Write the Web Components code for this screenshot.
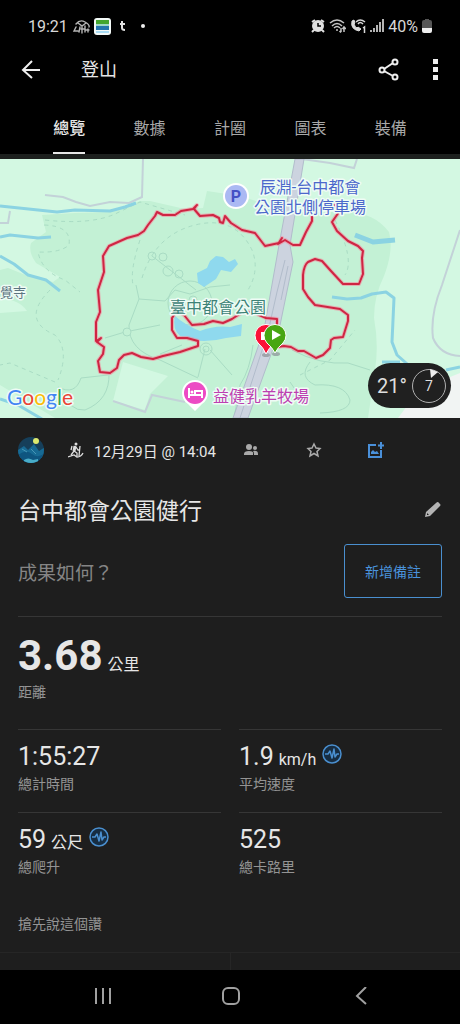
<!DOCTYPE html>
<html lang="zh-Hant">
<head>
<meta charset="utf-8">
<meta name="viewport" content="width=device-width, initial-scale=1">
<title>登山</title>
<style>
    body {
        margin: 0;
        background: #000;
        color: #e6e6e6;
        font-family: Roboto, "Noto Sans CJK TC", sans-serif;
    }
</style>
</head>
<body>
<activity-page></activity-page>

<script>
class StatusBar extends HTMLElement {
    constructor() {
        super();
        this.attachShadow({ mode: 'open' });
    }

    connectedCallback() {
        this.shadowRoot.innerHTML = `
            <style>
                :host {
                    display: flex;
                    justify-content: space-between;
                    align-items: center;
                    height: 52px;
                    padding: 0 28px;
                    box-sizing: border-box;
                    font-size: 16px;
                    color: #d8d8d8;
                }

                .group {
                    display: flex;
                    align-items: center;
                    gap: 4px;
                }

                svg {
                    display: block;
                }
            </style>

            <div class="group">
                <span>19:21</span>
                <svg width="18" height="16" viewBox="0 0 18 16" fill="none" stroke="#b5b5b5" stroke-linecap="round">
                    <path d="M4 6Q8 1 13 4T17 9M6 5L10 8L14 5M4 9L2 13H6M8 9L7 14M10 9V15M13 8V14M16 11V14M9 11H13M13 12H17" stroke-width="1.4"/>
                </svg>
                <svg width="17" height="17" viewBox="0 0 17 17">
                    <rect width="17" height="17" rx="3" fill="#f4faf8"/>
                    <rect x="2" y="2" width="13" height="4" fill="#43a62f"/>
                    <rect x="2" y="6" width="13" height="2" fill="#9ed8c6"/>
                    <rect x="2" y="8" width="13" height="4" fill="#2476ae"/>
                    <rect x="2" y="13" width="13" height="2" fill="#a9dcf4"/>
                </svg>
                <svg width="16" height="16" viewBox="0 0 16 16" fill="none" stroke="#e0e0e0" stroke-width="2">
                    <path d="M5 6H10M7 3V10Q7 12 10 12"/>
                </svg>
                <svg width="16" height="16" viewBox="0 0 16 16"><circle cx="8" cy="8" r="2" fill="#eee"/></svg>
            </div>
            <div class="group">
                <svg width="14" height="14" viewBox="0 0 14 14">
                    <path d="M1 3L4 1M13 3L10 1M3 11L1 13M11 11L13 13" stroke="#e0e0e0" stroke-width="2"/>
                    <circle cx="7" cy="7" r="6" fill="#e0e0e0"/>
                    <path d="M7 4V7H10" fill="none" stroke="#000" stroke-width="1.5"/>
                </svg>
                <svg width="17" height="14" viewBox="0 0 17 14" fill="none" stroke="#c4c4c4" stroke-width="1.5">
                    <path d="M1 4Q8 -2 15 4M3 7Q8 2 13 7M5 9Q8 6 11 9"/>
                    <path d="M8 10V12M12 9V13M10.5 12L12 13.5M15 13V8M13.5 10L15 8L17 10"/>
                </svg>
                <svg width="16" height="14" viewBox="0 0 16 14" fill="none" stroke="#d8d8d8">
                    <path d="M2 2Q0 10 9 12L11 10L8 8L7 9Q5 8 4 5L5 4L4 1Z" fill="#d8d8d8"/>
                    <path d="M6 3Q10 -1 15 3M8 5Q10 2 13 5" stroke-width="1.5"/>
                    <path d="M13 9L14.5 8V14" stroke-width="1.5"/>
                </svg>
                <svg width="14" height="14" viewBox="0 0 14 14" fill="#b4b4b4">
                    <path d="M0 11H2V13H0ZM3 9H5V13H3ZM6 6H8V13H6ZM9 3H11V13H9ZM12 0H14V13H12Z"/>
                </svg>
                <span>40%</span>
                <svg width="10" height="14" viewBox="0 0 10 14">
                    <path d="M3 0H7V1H8Q10 1 10 3V9H0V3Q0 1 2 1H3Z" fill="#565656"/>
                    <path d="M0 9H10V12Q10 14 8 14H2Q0 14 0 12Z" fill="#eee"/>
                </svg>
            </div>
        `;
    }
}

class AppBar extends HTMLElement {
    constructor() {
        super();
        this.attachShadow({ mode: 'open' });
    }

    connectedCallback() {
        this.shadowRoot.innerHTML = `
            <style>
                :host {
                    display: flex;
                    align-items: center;
                    height: 36px;
                    padding: 0 12px;
                }

                h1 {
                    flex: 1;
                    margin: 0 0 0 31px;
                    font-size: 18px;
                    font-weight: 400;
                    line-height: 38px;
                }

                button {
                    display: flex;
                    align-items: center;
                    justify-content: center;
                    width: 38px;
                    height: 36px;
                    padding: 0;
                    border: 0;
                    background: none;
                }

                .more {
                    width: 24px;
                    margin-left: 16px;
                }
            </style>

            <button aria-label="返回">
                <svg width="20" height="20" viewBox="0 0 20 20" fill="none" stroke="#eee" stroke-width="2">
                    <path d="M19 10H3M11 1L2 10L11 18"/>
                </svg>
            </button>
            <h1><slot></slot></h1>
            <button aria-label="分享">
                <svg width="22" height="24" viewBox="0 0 22 24" fill="none" stroke="#eee" stroke-width="2">
                    <path d="M6 11L15 5M6 13L15 18"/>
                    <circle cx="4" cy="12" r="2.5"/>
                    <circle cx="17" cy="4" r="2.5"/>
                    <circle cx="17" cy="19" r="2.5"/>
                </svg>
            </button>
            <button class="more" aria-label="更多">
                <svg width="6" height="22" viewBox="0 0 6 22" fill="#eee">
                    <path d="M0 0H5V5H0ZM0 8H5V13H0ZM0 16H5V21H0Z"/>
                </svg>
            </button>
        `;
    }
}

class TabBar extends HTMLElement {
    constructor() {
        super();
        this.attachShadow({ mode: 'open' });
    }

    connectedCallback() {
        const tabs = this.getAttribute('tabs').split(',');
        this.shadowRoot.innerHTML = `
            <style>
                :host {
                    display: block;
                    padding-top: 14px;
                    border-bottom: 5px solid #1d201e;
                }

                nav {
                    display: flex;
                    padding: 0 29px;
                }

                button {
                    flex: 1;
                    padding: 0;
                    border: 0;
                    background: none;
                    color: #a8a8a8;
                    font: inherit;
                    font-size: 16px;
                    line-height: 24px;
                }

                span {
                    display: inline-block;
                    padding: 15px 0 11px;
                    border-bottom: 2px solid transparent;
                }

                .active {
                    color: #e8e8e8;
                    font-weight: 500;
                }

                .active span {
                    border-color: #e8e8e8;
                }
            </style>

            <nav>
                ${tabs.map((tab, i) => `<button class="${i === 0 ? 'active' : ''}"><span>${tab}</span></button>`).join('')}
            </nav>
        `;
    }
}

class TrailMap extends HTMLElement {
    constructor() {
        super();
        this.attachShadow({ mode: 'open' });
    }

    connectedCallback() {
        this.shadowRoot.innerHTML = `
            <style>
                :host {
                    display: block;
                    position: relative;
                    overflow: hidden;
                    background: #d3f8e2;
                }

                .map {
                    display: block;
                    width: 100%;
                    height: auto;
                }

                .map text {
                    font-size: 16px;
                    paint-order: stroke;
                    stroke: #effcf6;
                    stroke-width: 3px;
                    stroke-linejoin: round;
                }

                .map .google {
                    font-family: Lato, sans-serif;
                    font-size: 21px;
                    font-weight: 400;
                }

                .weather {
                    position: absolute;
                    right: 9px;
                    bottom: 10px;
                    display: flex;
                    align-items: center;
                    gap: 4px;
                    height: 45px;
                    padding: 0 4px 0 9px;
                    border-radius: 23px;
                    background: #202020;
                    color: #dedede;
                    font-size: 20px;
                }

                .wind {
                    display: grid;
                    place-items: center;
                    font-size: 14px;
                }

                .wind > * {
                    grid-area: 1 / 1;
                }
            </style>

            <svg class="map" viewBox="0 159 460 259" role="img" aria-label="路線地圖">
                <defs>
                    <path id="track" d="M277 347L284 346L291 347L298 351L304 351L316 358L323 355L330 348L331 340L334 338L343 337L348 321L348 315L340 309L315 305L308 297L303 289V275Q304 265 308 262L315 259L322 261L331 271L343 284H359L363 274L362 258L363 251L358 246L348 241L337 231L332 222L339 212L335 205M312 210L312 221L306 232L300 245L293 245L285 240L278 244L282 238L279 243L265 246L255 233L242 230L231 223L225 216L223 223L220 222L219 218L213 215L200 216L194 209L197 205L193 209L181 211L175 215H163L157 212L155 216L148 225L144 231L138 235L127 238L109 246L103 256L104 272L98 290L100 312L96 322V341L101 338L97 342L104 347L103 354L98 361L100 372L110 373L117 368L119 360L124 355L132 353L141 357L153 359L163 356L180 352L198 346V341L187 338H177L172 330V318L176 312L184 315L192 325L204 324L213 321L223 323L232 319L241 313L252 312L266 318L277 319V325"/>
                </defs>

                <!-- park and clearings -->
                <path fill="#c3f1d5" d="M42 215L75 213L110 212L140 201L150 201L185 209L203 208L207 191L240 196L290 212H345Q374 212 389 232Q394 250 384 276Q374 296 374 318Q379 345 375 370L368 418H55L0 385V313L27 311Q20 300 0 298V270L8 268L28 276L53 282L60 277L36 263Q28 252 31 243L46 232Z"/>
                <path fill="#d3f8e2" d="M123 362L168 376L150 394L145 410L113 401Z"/>
                <path fill="#f1f4f3" d="M398 418L410 402L450 377L460 373V418Z"/>

                <!-- small roads -->
                <g fill="none" stroke="#c3d2d8" stroke-width="2">
                    <path d="M143 159L142 197L129 203L110 202L90 206L76 202L63 197L45 195"/>
                    <path d="M0 223H8L10 211"/>
                    <path d="M302 159L330 163L354 168L357 159"/>
                    <path d="M460 230L442 285Q430 315 433 338Q440 355 460 356"/>
                    <path d="M113 401L122 404L145 412L152 395L185 402"/>
                </g>

                <!-- footpaths -->
                <g fill="none" stroke="#a9dcc4" stroke-width="1">
                    <path d="M152 256L196 290M136 285L139 299L129 325Q128 350 160 360L198 378M139 299L165 301L175 290L190 294L210 287L230 285M105 338L125 332L160 325M205 349L198 377M210 350L232 375M182 345L160 354M109 373Q110 400 85 410Q70 412 58 387M58 387Q75 396 81 378L108 375"/>
                    <path d="M234 418L240 385Q250 370 253 345M292 350Q320 365 348 363L370 370M310 362Q298 377 315 385Q345 383 350 400Q350 412 320 413M290 382Q296 390 300 398"/>
                    <circle cx="152" cy="256" r="4"/><circle cx="163" cy="257" r="4"/><circle cx="168" cy="271" r="5"/><circle cx="179" cy="274" r="4"/>
                    <circle cx="206" cy="349" r="6"/><circle cx="206" cy="349" r="3"/><circle cx="127" cy="332" r="4" fill="#c3f1d5"/><circle cx="193" cy="300" r="4"/><circle cx="190" cy="303" r="22"/>
                    <g stroke-dasharray="4 4">
                        <path d="M45 220Q90 225 115 214L140 202L185 215M44 225Q72 226 69 245Q60 253 38 252Q42 272 65 280L80 292M140 240Q130 270 133 285M142 278Q155 235 195 225Q235 215 252 250Q260 270 248 290M50 290Q20 320 55 335Q70 350 58 380M55 382L10 363L0 365M300 375L330 360L355 330M335 220Q355 260 345 275"/>
                    </g>
                </g>

                <!-- water -->
                <g fill="none" stroke="#8bd3e2" stroke-width="3" stroke-linejoin="round">
                    <path d="M0 206L57 212L75 210L110 211L125 207L136 203"/>
                    <path d="M0 237L10 235L38 238L51 237"/>
                    <path d="M0 256L14 264L28 275L46 280L60 291"/>
                    <path d="M0 399L18 405L42 419"/>
                    <path d="M355 235L373 242L395 240" stroke-width="5"/>
                    <path d="M332 297L347 299L361 298L372 294L386 292L394 298L392 342L397 355L414 370M382 362H400M446 370L460 367"/>
                </g>
                <g fill="#8fd9ee">
                    <path d="M197 273L207 268L210 261L216 256L223 257L229 262L235 259L238 264L231 272L221 270L216 279L204 287L198 283Z"/>
                    <path d="M175 316Q185 325 200 331Q215 325 230 327L242 324L241 336L226 338Q200 345 180 336Q172 329 175 316Z"/>
                </g>

                <!-- highway -->
                <path d="M295 159H304L290 245L293 262L278 335L248 418H233L264 330L279 245Z" fill="#ccd3df" stroke="#b1bccb"/>
                <path d="M285 260L277 292L268 332L240 418M288 266L281 300" fill="none" stroke="#b1bccb"/>

                <!-- recorded track -->
                <g fill="none" stroke-linejoin="round" stroke-linecap="round">
                    <use href="#track" stroke="#f58a9d" stroke-opacity="0.6" stroke-width="4"/>
                    <use href="#track" stroke="#cf2543" stroke-width="2"/>
                </g>

                <!-- places -->
                <circle cx="236" cy="196" r="13" fill="#fff"/>
                <circle cx="236" cy="196" r="11" fill="#abb9f3"/>
                <text x="236" y="202" text-anchor="middle" fill="#4450c4" font-weight="700" style="stroke: none">P</text>
                <text x="310" y="193" text-anchor="middle" fill="#4c68cb">辰淵-台中都會</text>
                <text x="310" y="213" text-anchor="middle" fill="#4c68cb">公園北側停車場</text>
                <text x="218" y="313" text-anchor="middle" fill="#3d8277">臺中都會公園</text>
                <text x="0" y="297" fill="#5b7580" style="font-size: 13px">覺寺</text>
                <path d="M195 411L188 404Q182 400 182 393A13 13 0 0 1 208 393Q208 400 202 404Z" fill="#fff"/>
                <circle cx="195" cy="393" r="11" fill="#ec4bc4"/>
                <path d="M189 388V398M189 395H202M202 398V391H195V395" fill="none" stroke="#fff" stroke-width="2"/>
                <circle cx="192" cy="392" r="1.5" fill="#fff"/>
                <text x="213" y="402" fill="#bd3fb1">益健乳羊牧場</text>

                <!-- finish and start pins -->
                <ellipse cx="266" cy="355" rx="4" ry="2" fill="#8a9096" opacity="0.7"/>
                <ellipse cx="276" cy="354" rx="4" ry="2" fill="#8a9096" opacity="0.7"/>
                <path d="M266 354Q263 347 258 343A11 11 0 1 1 274 343Q269 348 266 354Z" fill="#fb1238" stroke="#fff"/>
                <rect x="261" y="332" width="8" height="8" fill="#fff"/>
                <path d="M275 353Q272 347 267 343A11 11 0 1 1 283 343Q278 347 275 353Z" fill="#48a612" stroke="#fff"/>
                <path d="M272 330L281 335L272 340Z" fill="#fff"/>

                <text class="google" x="7" y="405"><tspan fill="#4285f4">G</tspan><tspan fill="#ea4335">o</tspan><tspan fill="#fbbc05">o</tspan><tspan fill="#4285f4">g</tspan><tspan fill="#34a853">l</tspan><tspan fill="#ea4335">e</tspan></text>
            </svg>
            <div class="weather">
                <span>21°</span>
                <div class="wind">
                    <svg width="36" height="36" viewBox="0 0 36 36">
                        <circle cx="18" cy="18" r="16.5" fill="none" stroke="#b0b0b0"/>
                        <path d="M19 1L27 4L20 10Z" fill="#eee"/>
                    </svg>
                    <span>7</span>
                </div>
            </div>
        `;
    }
}

class ActivityMeta extends HTMLElement {
    constructor() {
        super();
        this.attachShadow({ mode: 'open' });
    }

    connectedCallback() {
        this.shadowRoot.innerHTML = `
            <style>
                :host {
                    display: flex;
                    align-items: center;
                    height: 64px;
                    font-size: 15px;
                }

                svg {
                    display: block;
                }

                .sport {
                    margin: 0 10px 0 23px;
                }

                .actions {
                    flex: 1;
                    display: flex;
                    justify-content: space-between;
                    max-width: 149px;
                    margin-left: 23px;
                }

                button {
                    padding: 4px;
                    border: 0;
                    background: none;
                }
            </style>

            <svg width="27" height="27" viewBox="0 0 27 27">
                <defs><clipPath id="round"><circle cx="13" cy="13" r="13"/></clipPath></defs>
                <g clip-path="url(#round)">
                    <rect width="27" height="27" fill="#163f5a"/>
                    <path d="M0 13L6 9L10 13L16 7L21 14L27 10V21H0Z" fill="#176a94"/>
                    <path d="M0 18Q8 12 14 17T27 16V27H0Z" fill="#0e5580"/>
                    <path d="M6 23Q10 20 15 23L20 22V27H6Z" fill="#48acc8"/>
                    <path d="M4 12L9 15M13 12L18 17" stroke="#4796b6"/>
                </g>
                <circle cx="18" cy="4" r="3" fill="#dce96e"/>
            </svg>
            <svg class="sport" width="16" height="17" viewBox="0 0 16 17" fill="none" stroke="#ddd" stroke-width="1.3">
                <circle cx="8" cy="2" r="1.5" fill="#ddd" stroke="none"/>
                <path d="M7 4L6 9L9 11V14M6 9L3 13M8 5L10 8H12M4 4L3 8M12 4L11 14M0 15L6 13L9 15Q13 15 15 11"/>
                <path d="M7 4L6 9" stroke-width="3"/>
            </svg>
            <time>12月29日 @ 14:04</time>
            <div class="actions">
                <button aria-label="參與者">
                    <svg width="16" height="16" viewBox="0 0 16 16" fill="#aaa">
                        <circle cx="6" cy="5" r="3"/><circle cx="12" cy="6" r="2"/>
                        <path d="M1 13V12Q1 9 6 9T10 12V13ZM11 13V12Q11 10 10 9Q15 8 15 12V13Z"/>
                    </svg>
                </button>
                <button aria-label="最愛">
                    <svg width="16" height="16" viewBox="0 0 16 16" fill="none" stroke="#aaa" stroke-width="1.5">
                        <path d="M8 2L10 6L14 6.5L11 9.5L12 14L8 11.5L4 14L5 9.5L2 6.5L6 6Z"/>
                    </svg>
                </button>
                <button aria-label="新增相片">
                    <svg width="16" height="16" viewBox="0 0 16 16" fill="none" stroke="#4a90d9" stroke-width="2">
                        <path d="M8 3H1V15H13V8M10 3.5H16M13 0V7"/>
                        <path d="M3 12V10L5 8L7 10L9 9L11 12Z" fill="#4a90d9" stroke="none"/>
                    </svg>
                </button>
            </div>
        `;
    }
}

class StatItem extends HTMLElement {
    constructor() {
        super();
        this.attachShadow({ mode: 'open' });
    }

    connectedCallback() {
        const unit = this.getAttribute('unit');
        this.shadowRoot.innerHTML = `
            <style>
                :host {
                    display: block;
                    padding: 11px 0 18px;
                    border-top: 1px solid #363636;
                }

                .value {
                    display: flex;
                    align-items: baseline;
                    gap: 5px;
                    font-size: 25px;
                    line-height: 32px;
                }

                .unit {
                    font-size: 16px;
                    line-height: 20px;
                }

                .label {
                    margin-top: 1px;
                    color: #949494;
                    font-size: 14px;
                    line-height: 20px;
                }

                svg {
                    align-self: flex-start;
                    margin: 3px 0 0 1px;
                }

                :host([large]) {
                    padding: 14px 0 27px;
                }

                :host([large]) .value {
                    font-size: 42px;
                    font-weight: 700;
                    line-height: 50px;
                }

                :host([large]) .unit {
                    font-weight: 400;
                    line-height: 20px;
                }
            </style>

            <div class="value">
                <span><slot></slot></span>
                ${unit ? `<span class="unit">${unit}</span>` : ''}
                ${this.hasAttribute('insight') ? `
                <svg width="20" height="20" viewBox="0 0 20 20" fill="none" stroke="#4a8fcf">
                    <circle cx="10" cy="10" r="9" fill="#172d42" stroke-width="1.5"/>
                    <path d="M3 10H6L8 7L10 14L12 5L13 13L15 10H17" stroke-width="1.5" stroke-linejoin="round"/>
                </svg>` : ''}
            </div>
            <div class="label">${this.getAttribute('label')}</div>
        `;
    }
}

class SystemNav extends HTMLElement {
    constructor() {
        super();
        this.attachShadow({ mode: 'open' });
    }

    connectedCallback() {
        this.shadowRoot.innerHTML = `
            <style>
                :host {
                    display: flex;
                    justify-content: space-around;
                    align-items: center;
                    height: 54px;
                    padding: 0 38px;
                    background: #000;
                }

                button {
                    padding: 6px;
                    border: 0;
                    background: none;
                }

                svg {
                    display: block;
                }
            </style>

            <button aria-label="最近">
                <svg width="20" height="20" viewBox="0 0 20 20" stroke="#a0a0a0" stroke-width="2">
                    <path d="M4 1V17M11 1V17M18 1V17"/>
                </svg>
            </button>
            <button aria-label="主畫面">
                <svg width="20" height="20" viewBox="0 0 20 20" fill="none" stroke="#a0a0a0" stroke-width="2">
                    <rect x="3" y="1" width="16" height="16" rx="5"/>
                </svg>
            </button>
            <button aria-label="返回">
                <svg width="20" height="20" viewBox="0 0 20 20" fill="none" stroke="#a0a0a0" stroke-width="2">
                    <path d="M18 0L9 9L18 17"/>
                </svg>
            </button>
        `;
    }
}

class ActivityPage extends HTMLElement {
    constructor() {
        super();
        this.attachShadow({ mode: 'open' });
    }

    connectedCallback() {
        this.shadowRoot.innerHTML = `
            <style>
                :host {
                    display: flex;
                    flex-direction: column;
                    min-height: 100vh;
                }

                main {
                    flex: 1;
                    display: flex;
                    flex-direction: column;
                    background: #1e1e1e;
                }

                .details {
                    padding: 0 18px;
                }

                .row {
                    display: flex;
                    align-items: center;
                    justify-content: space-between;
                }

                h2 {
                    margin: 0;
                    font-size: 23px;
                    font-weight: 400;
                    line-height: 60px;
                }

                button {
                    font: inherit;
                    background: none;
                }

                .edit {
                    padding: 0;
                    border: 0;
                }

                .notes {
                    margin: 2px 0 18px;
                    color: #858585;
                    font-size: 19px;
                }

                .add {
                    height: 54px;
                    padding: 0 20px;
                    border: 1px solid #4a8fcf;
                    border-radius: 3px;
                    color: #4a93dc;
                    font-size: 14px;
                }

                .stats {
                    display: grid;
                    grid-template-columns: 1fr 1fr;
                    column-gap: 18px;
                }

                .wide {
                    grid-column: 1 / -1;
                }

                .likes {
                    margin: 19px 0 18px;
                    color: #949494;
                    font-size: 14px;
                    line-height: 20px;
                }

                .footer {
                    flex: 1;
                    display: grid;
                    grid-template-columns: 1fr 1fr;
                    min-height: 16px;
                    border-top: 1px solid #262626;
                }

                .footer div + div {
                    border-left: 1px solid #262626;
                }
            </style>

            <status-bar></status-bar>
            <app-bar>登山</app-bar>
            <tab-bar tabs="總覽,數據,計圈,圖表,裝備"></tab-bar>
            <main>
                <trail-map></trail-map>
                <div class="details">
                    <activity-meta></activity-meta>
                    <div class="row">
                        <h2>台中都會公園健行</h2>
                        <button class="edit" aria-label="編輯">
                            <svg width="18" height="18" viewBox="0 0 18 18" fill="#b4b4b4">
                                <path d="M1 16L2 11L12 2Q14 0 15 2L16 3Q17 4 16 5L6 15Z"/>
                                <path d="M3 12L5 14L3 14Z" fill="#1e1e1e"/>
                            </svg>
                        </button>
                    </div>
                    <div class="row notes">
                        <span>成果如何？</span>
                        <button class="add">新增備註</button>
                    </div>
                    <div class="stats">
                        <stat-item class="wide" large label="距離" unit="公里">3.68</stat-item>
                        <stat-item label="總計時間">1:55:27</stat-item>
                        <stat-item label="平均速度" unit="km/h" insight>1.9</stat-item>
                        <stat-item label="總爬升" unit="公尺" insight>59</stat-item>
                        <stat-item label="總卡路里">525</stat-item>
                    </div>
                    <p class="likes">搶先說這個讚</p>
                </div>
                <div class="footer"><div></div><div></div></div>
            </main>
            <system-nav></system-nav>
        `;
    }
}

customElements.define('status-bar', StatusBar);
customElements.define('app-bar', AppBar);
customElements.define('tab-bar', TabBar);
customElements.define('trail-map', TrailMap);
customElements.define('activity-meta', ActivityMeta);
customElements.define('stat-item', StatItem);
customElements.define('system-nav', SystemNav);
customElements.define('activity-page', ActivityPage);
</script>
</body>
</html>
